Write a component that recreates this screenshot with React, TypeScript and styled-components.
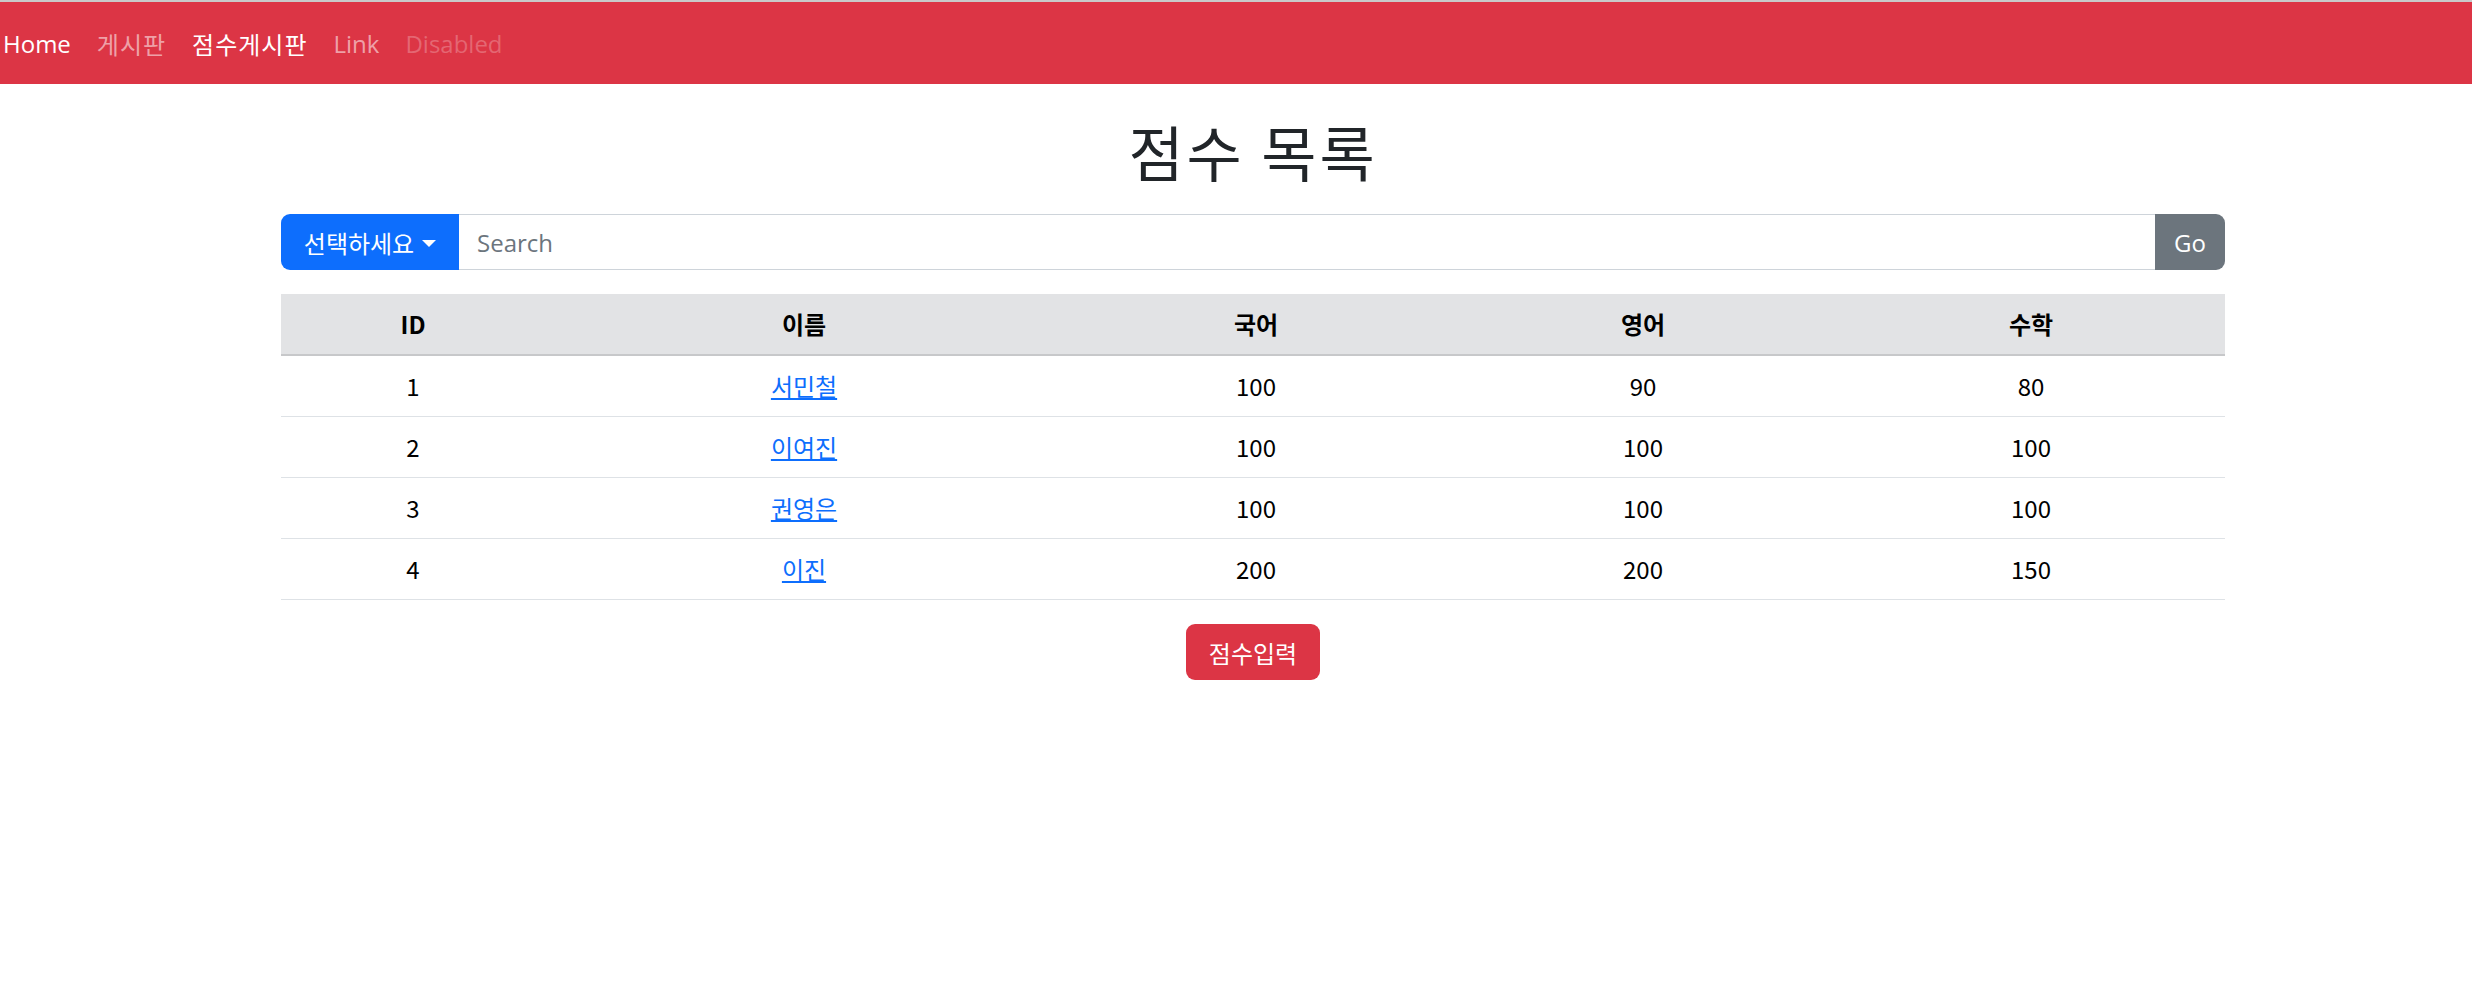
import styled, { createGlobalStyle } from "styled-components";

const GlobalStyle = createGlobalStyle`
  body {
    margin: 0;
    background: #fff;
    color: #212529;
    font-family: "Open Sans", "Noto Sans CJK KR", sans-serif;
    font-size: 24px;
  }
`

// navbar
const NavBar = styled.nav`
  height: 82px;
  border-top: 2px solid #c9c9c9;
  background: #dc3545;
  display: flex;
  align-items: center;
  padding-left: 3px;
`
const NavLink = styled.a<{ $state: "active" | "normal" | "disabled"; $wide?: boolean }>`
  padding: 0 13px;
  font-size: 24px;
  letter-spacing: ${(p) => (p.$wide ? "1px" : "0")};
  text-decoration: none;
  color: ${(p) =>
    p.$state === "active"
      ? "#fff"
      : p.$state === "disabled"
      ? "rgba(255, 255, 255, 0.25)"
      : "rgba(255, 255, 255, 0.55)"};
  &:first-child {
    padding-left: 0;
  }
`

// contents
const Main = styled.main`
  width: 1944px;
  margin-left: 281px;
`
const Title = styled.h1`
  margin: 31px 0 27px;
  text-align: center;
  font-size: 60px;
  font-weight: 400;
  letter-spacing: 3px;
  line-height: 72px;
  font-family: "Noto Sans CJK KR", sans-serif;
`
const SearchGroup = styled.div`
  display: flex;
  height: 56px;
`
const SelectButton = styled.button`
  width: 178px;
  border: none;
  border-radius: 9px 0 0 9px;
  background: #0d6efd;
  color: #fff;
  font-family: "Noto Sans CJK KR", sans-serif;
  font-size: 24px;
  display: flex;
  align-items: center;
  justify-content: center;
  gap: 8px;
  padding: 0;
`
const Caret = styled.span`
  width: 0;
  height: 0;
  border-left: 7px solid transparent;
  border-right: 7px solid transparent;
  border-top: 7px solid #fff;
  margin-top: 2px;
`
const SearchInput = styled.input`
  flex: 1;
  border: 1px solid #ced4da;
  border-left: none;
  border-right: none;
  padding: 0 18px;
  font-family: "Open Sans", sans-serif;
  font-size: 24px;
  color: #212529;
  outline: none;
  &::placeholder {
    color: #6c757d;
  }
`
const GoButton = styled.button`
  width: 70px;
  border: none;
  border-radius: 0 9px 9px 0;
  background: #6c757d;
  color: #fff;
  font-family: "Open Sans", sans-serif;
  font-size: 24px;
  padding: 0;
`

// table
const Table = styled.table`
  width: 100%;
  margin-top: 24px;
  border-collapse: collapse;
  font-family: "Noto Sans CJK KR", sans-serif;
  font-size: 24px;
`
const HeadCell = styled.th<{ $width: number }>`
  width: ${(p) => p.$width}px;
  padding: 12px 0;
  line-height: 36px;
  background: #e2e3e5;
  color: #000;
  font-weight: 700;
  border-bottom: 2px solid #c7c8ca;
`
const Cell = styled.td`
  padding: 12px 0;
  line-height: 36px;
  text-align: center;
  color: #000;
  border-bottom: 1px solid #dee2e6;
`
const NameLink = styled.a`
  color: #0d6efd;
  text-decoration: underline;
`
const Footer = styled.div`
  display: flex;
  justify-content: center;
  margin-top: 24px;
`
const InputButton = styled.button`
  width: 134px;
  height: 56px;
  border: none;
  border-radius: 9px;
  background: #dc3545;
  color: #fff;
  font-family: "Noto Sans CJK KR", sans-serif;
  font-size: 24px;
  padding: 0;
`

const columns = [
  { label: "ID", width: 264 },
  { label: "이름", width: 518 },
  { label: "국어", width: 386 },
  { label: "영어", width: 388 },
  { label: "수학", width: 388 },
]

const scores = [
  { id: 1, name: "서민철", kor: 100, eng: 90, math: 80 },
  { id: 2, name: "이여진", kor: 100, eng: 100, math: 100 },
  { id: 3, name: "권영은", kor: 100, eng: 100, math: 100 },
  { id: 4, name: "이진", kor: 200, eng: 200, math: 150 },
]

export default function App() {
  return (
    <>
      <GlobalStyle />
      <NavBar>
        <NavLink $state="active">Home</NavLink>
        <NavLink $state="normal" $wide>게시판</NavLink>
        <NavLink $state="active" $wide>점수게시판</NavLink>
        <NavLink $state="normal">Link</NavLink>
        <NavLink $state="disabled">Disabled</NavLink>
      </NavBar>

      <Main>
        <Title>점수 목록</Title>

        <SearchGroup>
          <SelectButton>
            선택하세요
            <Caret />
          </SelectButton>
          <SearchInput placeholder="Search" />
          <GoButton>Go</GoButton>
        </SearchGroup>

        <Table>
          <thead>
            <tr>
              {columns.map((col) => (
                <HeadCell key={col.label} $width={col.width}>
                  {col.label}
                </HeadCell>
              ))}
            </tr>
          </thead>
          <tbody>
            {scores.map((s) => (
              <tr key={s.id}>
                <Cell>{s.id}</Cell>
                <Cell>
                  <NameLink href="#">{s.name}</NameLink>
                </Cell>
                <Cell>{s.kor}</Cell>
                <Cell>{s.eng}</Cell>
                <Cell>{s.math}</Cell>
              </tr>
            ))}
          </tbody>
        </Table>

        <Footer>
          <InputButton>점수입력</InputButton>
        </Footer>
      </Main>
    </>
  )
}
